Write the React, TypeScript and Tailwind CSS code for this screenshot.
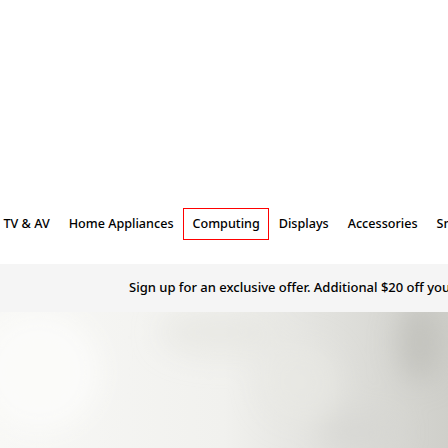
const NAV = ["TV & AV", "Home Appliances", "Computing", "Displays", "Accessories", "Smart Things"];

export default function App() {
  return (
    <div className="h-[448px] w-[448px] overflow-hidden bg-white font-['Noto_Sans',sans-serif] text-[#000]">
      <div className="h-[208px]" />
      <nav className="flex h-[56px] items-start">
        <ul className="ml-[-6px] flex whitespace-nowrap">
          {NAV.map((item) => (
            <li
              key={item}
              className={
                item === "Computing"
                  ? "flex h-[32px] items-center border border-[#ff0000] px-[8.5px] text-[12.6px] font-medium"
                  : "flex h-[32px] items-center border border-transparent px-[8.5px] text-[12.6px] font-medium"
              }
            >
              {item}
            </li>
          ))}
        </ul>
      </nav>
      <div className="flex h-[48px] items-center overflow-hidden whitespace-nowrap bg-[#f5f5f5] pl-[129px] text-[13px] font-medium">
        Sign up for an exclusive offer. Additional $20 off your first order.
      </div>
      <div className="relative h-[136px] overflow-hidden bg-gradient-to-r from-[#f8f8f6] via-[#f1f1ee] to-[#cfcfca]">
        <svg className="absolute inset-0" width="448" height="136" viewBox="0 0 448 136">
          <defs>
            <filter id="blur" x="-50%" y="-50%" width="200%" height="200%">
              <feGaussianBlur stdDeviation="14" />
            </filter>
          </defs>
          <g filter="url(#blur)">
            <ellipse cx="40" cy="60" rx="60" ry="60" fill="#fbfbf9" />
            <ellipse cx="220" cy="20" rx="60" ry="25" fill="#e4e4df" opacity="0.6" />
            <ellipse cx="420" cy="30" rx="22" ry="40" fill="#bcbcb6" opacity="0.7" />
            <ellipse cx="360" cy="120" rx="40" ry="20" fill="#d6d6d1" opacity="0.7" />
            <ellipse cx="300" cy="70" rx="40" ry="40" fill="#e9e9e5" opacity="0.6" />
          </g>
        </svg>
      </div>
    </div>
  );
}
